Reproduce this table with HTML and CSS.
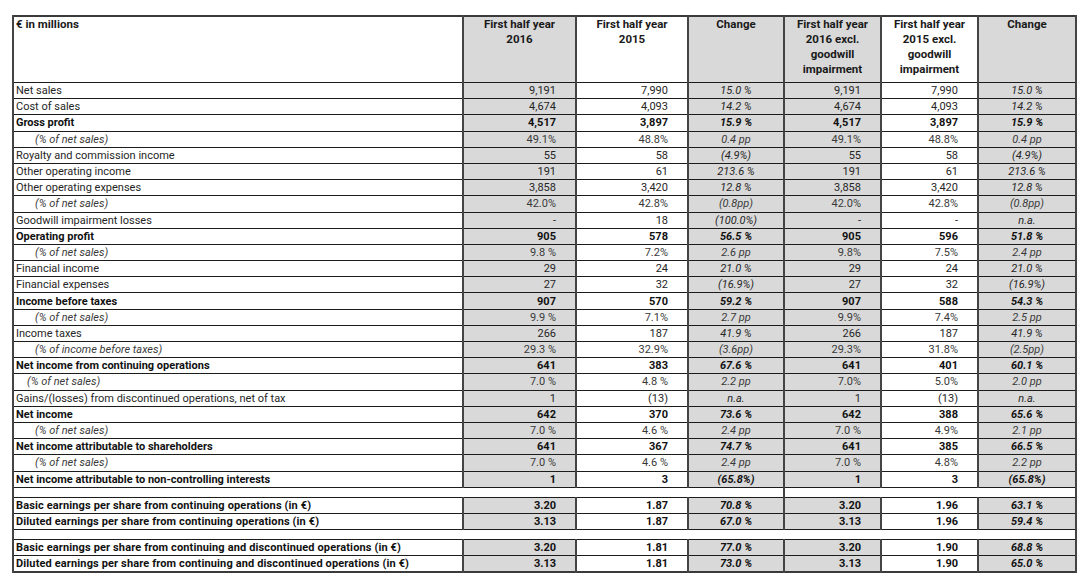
FILE: index.html
```html
<!DOCTYPE html>
<html lang="en">
<head>
<meta charset="utf-8">
<title>Income statement</title>
<link rel="stylesheet" href="styles.css">
</head>
<body>
<table class="fin">
  <colgroup>
    <col class="c-label"><col class="c-num"><col class="c-num2"><col class="c-chg"><col class="c-ex"><col class="c-ex"><col class="c-chg2">
  </colgroup>
  <thead>
    <tr class="head">
      <th class="lbl">€ in millions</th>
      <th class="g">First half year<br>2016</th>
      <th>First half year<br>2015</th>
      <th class="g">Change</th>
      <th class="g">First half year<br>2016 excl.<br>goodwill<br>impairment</th>
      <th>First half year<br>2015 excl.<br>goodwill<br>impairment</th>
      <th class="g">Change</th>
    </tr>
  </thead>
  <tbody>
    <tr><td class="lbl">Net sales</td><td class="n g">9,191</td><td class="n">7,990</td><td class="c g">15.0 %</td><td class="n g">9,191</td><td class="n">7,990</td><td class="c g">15.0 %</td></tr>
    <tr><td class="lbl">Cost of sales</td><td class="n g">4,674</td><td class="n">4,093</td><td class="c g">14.2 %</td><td class="n g">4,674</td><td class="n">4,093</td><td class="c g">14.2 %</td></tr>
    <tr class="b"><td class="lbl">Gross profit</td><td class="n g">4,517</td><td class="n">3,897</td><td class="c g">15.9 %</td><td class="n g">4,517</td><td class="n">3,897</td><td class="c g">15.9 %</td></tr>
    <tr class="p"><td class="lbl ind">(% of net sales)</td><td class="n g">49.1%</td><td class="n">48.8%</td><td class="c g">0.4 pp</td><td class="n g">49.1%</td><td class="n">48.8%</td><td class="c g">0.4 pp</td></tr>
    <tr><td class="lbl">Royalty and commission income</td><td class="n g">55</td><td class="n">58</td><td class="c g">(4.9%)</td><td class="n g">55</td><td class="n">58</td><td class="c g">(4.9%)</td></tr>
    <tr><td class="lbl">Other operating income</td><td class="n g">191</td><td class="n">61</td><td class="c g">213.6 %</td><td class="n g">191</td><td class="n">61</td><td class="c g">213.6 %</td></tr>
    <tr><td class="lbl">Other operating expenses</td><td class="n g">3,858</td><td class="n">3,420</td><td class="c g">12.8 %</td><td class="n g">3,858</td><td class="n">3,420</td><td class="c g">12.8 %</td></tr>
    <tr class="p"><td class="lbl ind">(% of net sales)</td><td class="n g">42.0%</td><td class="n">42.8%</td><td class="c g">(0.8pp)</td><td class="n g">42.0%</td><td class="n">42.8%</td><td class="c g">(0.8pp)</td></tr>
    <tr><td class="lbl">Goodwill impairment losses</td><td class="n g">-</td><td class="n">18</td><td class="c g">(100.0%)</td><td class="n g">-</td><td class="n">-</td><td class="c g">n.a.</td></tr>
    <tr class="b"><td class="lbl">Operating profit</td><td class="n g">905</td><td class="n">578</td><td class="c g">56.5 %</td><td class="n g">905</td><td class="n">596</td><td class="c g">51.8 %</td></tr>
    <tr class="p"><td class="lbl ind">(% of net sales)</td><td class="n g">9.8 %</td><td class="n">7.2%</td><td class="c g">2.6 pp</td><td class="n g">9.8%</td><td class="n">7.5%</td><td class="c g">2.4 pp</td></tr>
    <tr><td class="lbl">Financial income</td><td class="n g">29</td><td class="n">24</td><td class="c g">21.0 %</td><td class="n g">29</td><td class="n">24</td><td class="c g">21.0 %</td></tr>
    <tr><td class="lbl">Financial expenses</td><td class="n g">27</td><td class="n">32</td><td class="c g">(16.9%)</td><td class="n g">27</td><td class="n">32</td><td class="c g">(16.9%)</td></tr>
    <tr class="b"><td class="lbl">Income before taxes</td><td class="n g">907</td><td class="n">570</td><td class="c g">59.2 %</td><td class="n g">907</td><td class="n">588</td><td class="c g">54.3 %</td></tr>
    <tr class="p"><td class="lbl ind">(% of net sales)</td><td class="n g">9.9 %</td><td class="n">7.1%</td><td class="c g">2.7 pp</td><td class="n g">9.9%</td><td class="n">7.4%</td><td class="c g">2.5 pp</td></tr>
    <tr><td class="lbl">Income taxes</td><td class="n g">266</td><td class="n">187</td><td class="c g">41.9 %</td><td class="n g">266</td><td class="n">187</td><td class="c g">41.9 %</td></tr>
    <tr class="p"><td class="lbl ind">(% of income before taxes)</td><td class="n g">29.3 %</td><td class="n">32.9%</td><td class="c g">(3.6pp)</td><td class="n g">29.3%</td><td class="n">31.8%</td><td class="c g">(2.5pp)</td></tr>
    <tr class="b"><td class="lbl">Net income from continuing operations</td><td class="n g">641</td><td class="n">383</td><td class="c g">67.6 %</td><td class="n g">641</td><td class="n">401</td><td class="c g">60.1 %</td></tr>
    <tr class="p"><td class="lbl ind2">(% of net sales)</td><td class="n g">7.0 %</td><td class="n">4.8 %</td><td class="c g">2.2 pp</td><td class="n g">7.0%</td><td class="n">5.0%</td><td class="c g">2.0 pp</td></tr>
    <tr><td class="lbl">Gains/(losses) from discontinued operations, net of tax</td><td class="n g">1</td><td class="n">(13)</td><td class="c g">n.a.</td><td class="n g">1</td><td class="n">(13)</td><td class="c g">n.a.</td></tr>
    <tr class="b"><td class="lbl">Net income</td><td class="n g">642</td><td class="n">370</td><td class="c g">73.6 %</td><td class="n g">642</td><td class="n">388</td><td class="c g">65.6 %</td></tr>
    <tr class="p"><td class="lbl ind">(% of net sales)</td><td class="n g">7.0 %</td><td class="n">4.6 %</td><td class="c g">2.4 pp</td><td class="n g">7.0 %</td><td class="n">4.9%</td><td class="c g">2.1 pp</td></tr>
    <tr class="b"><td class="lbl">Net income attributable to shareholders</td><td class="n g">641</td><td class="n">367</td><td class="c g">74.7 %</td><td class="n g">641</td><td class="n">385</td><td class="c g">66.5 %</td></tr>
    <tr class="p"><td class="lbl ind">(% of net sales)</td><td class="n g">7.0 %</td><td class="n">4.6 %</td><td class="c g">2.4 pp</td><td class="n g">7.0 %</td><td class="n">4.8%</td><td class="c g">2.2 pp</td></tr>
    <tr class="b"><td class="lbl">Net income attributable to non-controlling interests</td><td class="n g">1</td><td class="n">3</td><td class="c g">(65.8%)</td><td class="n g">1</td><td class="n">3</td><td class="c g">(65.8%)</td></tr>
    <tr class="gap"><td colspan="4"></td><td colspan="3"></td></tr>
    <tr class="b eps"><td class="lbl">Basic earnings per share from continuing operations (in €)</td><td class="n g">3.20</td><td class="n">1.87</td><td class="c g">70.8 %</td><td class="n g">3.20</td><td class="n">1.96</td><td class="c g">63.1 %</td></tr>
    <tr class="b eps"><td class="lbl">Diluted earnings per share from continuing operations (in €)</td><td class="n g">3.13</td><td class="n">1.87</td><td class="c g">67.0 %</td><td class="n g">3.13</td><td class="n">1.96</td><td class="c g">59.4 %</td></tr>
    <tr class="gap"><td colspan="7"></td></tr>
    <tr class="b eps"><td class="lbl">Basic earnings per share from continuing and discontinued operations (in €)</td><td class="n g">3.20</td><td class="n">1.81</td><td class="c g">77.0 %</td><td class="n g">3.20</td><td class="n">1.90</td><td class="c g">68.8 %</td></tr>
    <tr class="b eps"><td class="lbl">Diluted earnings per share from continuing and discontinued operations (in €)</td><td class="n g">3.13</td><td class="n">1.81</td><td class="c g">73.0 %</td><td class="n g">3.13</td><td class="n">1.90</td><td class="c g">65.0 %</td></tr>
  </tbody>
</table>
</body>
</html>
```

FILE: styles.css
```css
html, body {
  margin: 0;
  padding: 0;
  background: #ffffff;
}
body {
  padding: 15px 0 0 12px;
  font-family: Roboto, "Liberation Sans", sans-serif;
  font-size: 11px;
  color: #262626;
}
.fin {
  border-collapse: collapse;
  table-layout: fixed;
  width: 1064px;
  border: 2px solid #3a3a3a;
}
.c-label { width: 450px; }
.c-num { width: 113px; }
.c-num2 { width: 112px; }
.c-chg { width: 96px; }
.c-ex { width: 97px; }
.c-chg2 { width: 98px; }

.fin th, .fin td {
  padding: 0;
  border-left: 2px solid #444;
  border-right: 2px solid #444;
  border-top: 1px solid #1c1c1c;
  border-bottom: 1px solid #1c1c1c;
  white-space: nowrap;
  overflow: hidden;
}
.head th {
  height: 65px;
  vertical-align: top;
  text-align: center;
  font-weight: 700;
  font-size: 11.5px;
  line-height: 15px;
  padding-top: 0;
  color: #1a1a1a;
}
.head th.lbl {
  text-align: left;
  padding-left: 2px;
}
.fin tbody tr { height: 16.2px; }
.fin td {
  line-height: 13px;
  vertical-align: middle;
}
.g { background: #d9d9d9; }
.lbl { text-align: left; padding-left: 2px !important; }
.n { text-align: right; padding-right: 19px !important; }
.c { text-align: center; font-style: italic; }
.b td { font-weight: 700; color: #111; }
.eps td.lbl { letter-spacing: 0.13px; }
.p td { color: #3a3a3a; }
.p td.lbl { font-style: italic; }
.ind { padding-left: 21px !important; }
.ind2 { padding-left: 13px !important; }
.gap { height: 9px !important; }
.gap td {
  background: #fff;
  height: 9px;
  line-height: 0;
}
```
